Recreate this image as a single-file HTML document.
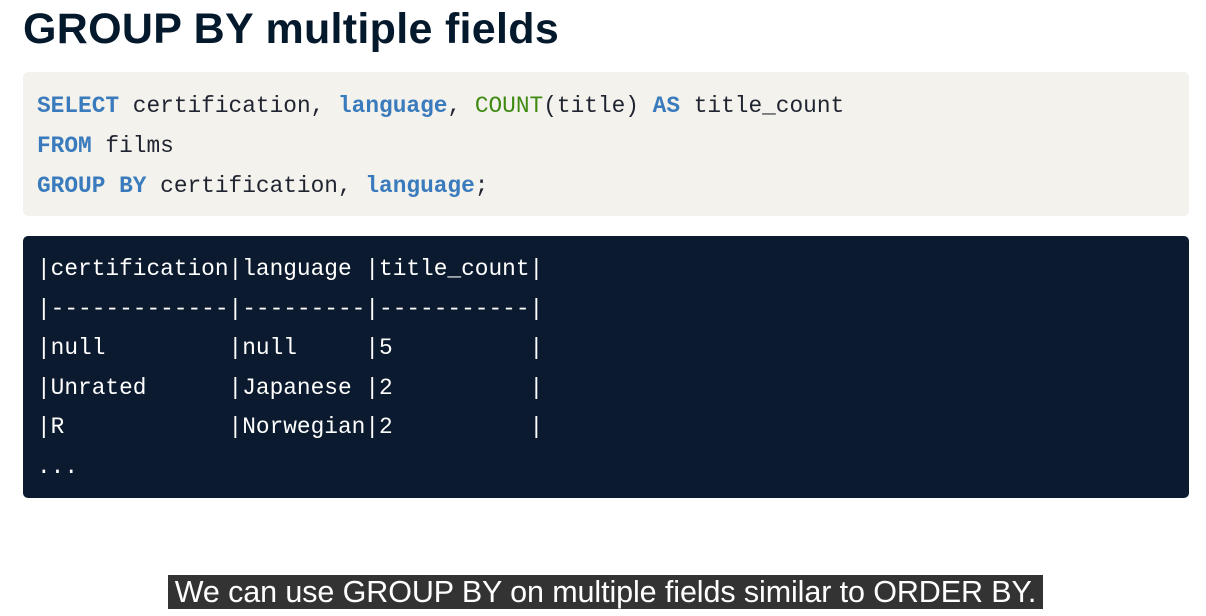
<!DOCTYPE html>
<html><head><style>
body{margin:0;width:1206px;height:616px;background:#fff;position:relative;overflow:hidden;font-family:"Liberation Sans",sans-serif}
h1{position:absolute;left:23px;top:5px;margin:0;font-size:43px;font-weight:bold;color:#05192d;letter-spacing:0.3px}
.code{position:absolute;left:23px;top:72px;width:1166px;height:144px;background:#f4f2ec;border-radius:5px}
.out{position:absolute;left:23px;top:236px;width:1166px;height:262px;background:#0b1a2e;border-radius:5px}
pre{margin:0;position:absolute;left:14px;font-family:"Liberation Mono",monospace;font-size:22.8px;white-space:pre}
.code pre{top:14px;line-height:40px;color:#1f2430}
.out pre{top:14px;line-height:39.5px;color:#fff}
.k{color:#3a7bbd;font-weight:bold}.f{color:#3e8a12}
.sub{position:absolute;left:168px;top:575px;height:34px;width:875px;background:#333;color:#fff;font-size:30.5px;line-height:35px;text-align:center;white-space:nowrap;letter-spacing:-0.1px}
</style></head><body>
<h1>GROUP BY multiple fields</h1>
<div class="code"><pre><span class="k">SELECT</span> certification, <span class="k">language</span>, <span class="f">COUNT</span>(title) <span class="k">AS</span> title_count
<span class="k">FROM</span> films
<span class="k">GROUP BY</span> certification, <span class="k">language</span>;</pre></div>
<div class="out"><pre>|certification|language |title_count|
|-------------|---------|-----------|
|null         |null     |5          |
|Unrated      |Japanese |2          |
|R            |Norwegian|2          |
...</pre></div>
<div class="sub">We can use GROUP BY on multiple fields similar to ORDER BY.</div>
</body></html>
